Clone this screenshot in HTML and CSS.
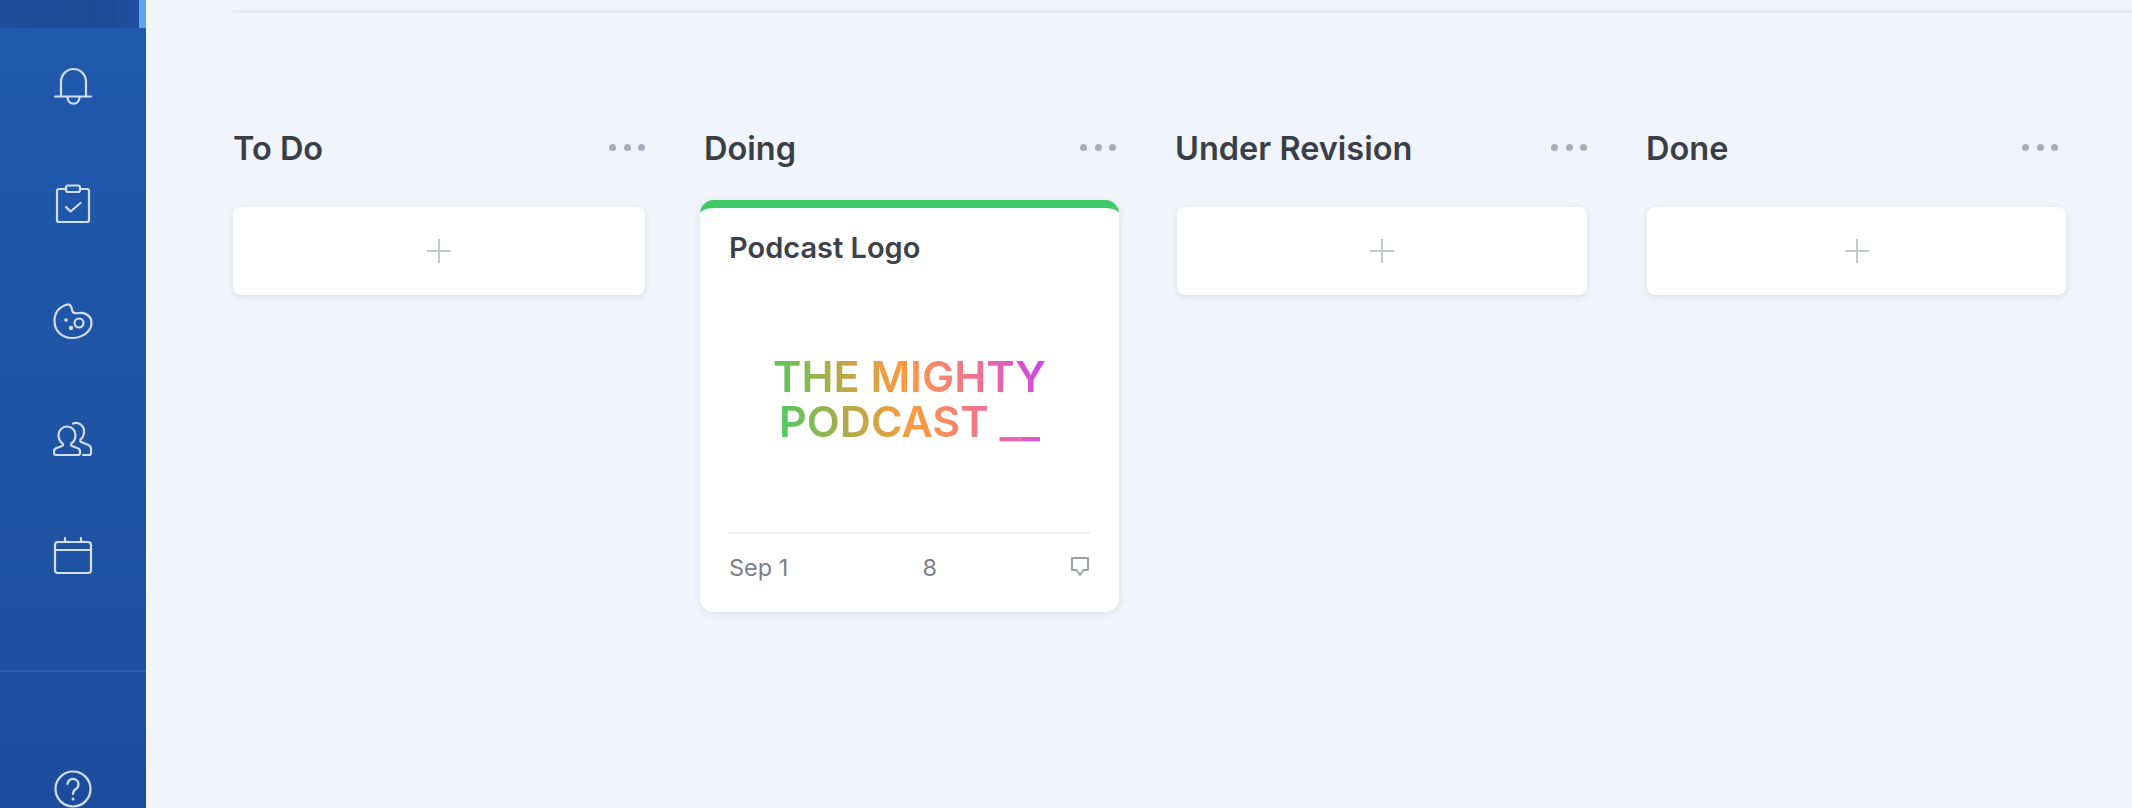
FILE: index.html
```html
<!DOCTYPE html>
<html>
<head>
<meta charset="utf-8">
<title>Board</title>
<link rel="stylesheet" href="styles.css">
</head>
<body>
<div class="app">
	<aside class="sidebar">
		<div class="activeitem"></div>
		<nav class="sidenav">
			<svg class="navicon" viewBox="0 0 40 40"><path d="M8 29.5V14.5a12.5 12.5 0 0 1 25 0V29.5"/><path d="M2 29.5H38"/><path d="M14.5 30c0 9 12 9 12 0"/></svg>
			<svg class="navicon" viewBox="0 0 40 40"><path d="M13 5H6a2 2 0 0 0-2 2V36a2 2 0 0 0 2 2H34a2 2 0 0 0 2-2V7a2 2 0 0 0-2-2H27"/><rect x="13" y="1.500" width="14" height="6.500" rx="2"/><path d="M13 23l4.500 4.500L27.500 19"/></svg>
			<svg class="navicon" viewBox="0 0 40 40"><path d="M14 3.500C6 6 1.500 12 1.500 20C1.500 30 9 37 19 37C30 37 38.500 30 38.500 22C38.500 15 32 11 26 12C22 12.700 19.500 12 19 9C18.700 6 17 2.500 14 3.500Z"/><circle cx="26" cy="22" r="4.500"/><circle class="solid" cx="13" cy="19" r="1.800"/><circle class="solid" cx="18" cy="27" r="2.200"/></svg>
			<svg class="navicon" viewBox="0 0 40 40"><path d="M3 37a2 2 0 0 1-2-2v-2c0-2 2-3 4-3.500l4-1.500c1.500-.5 1-2.500 0-3c-2-1.500-3.500-4-3.500-8a8.500 8.500 0 0 1 17 0c0 4-1.500 6.500-3.500 8c-1 .5-1.500 2.500 0 3l4 1.500c2 .5 4 1.500 4 3.500v2a2 2 0 0 1-2 2z"/><path d="M20 5.500a8 8 0 0 1 11 7.500c0 4-1 6.500-3 8c-1 .7-1 2.300 0 3l5 2c3 1 5 2 5 4.500v4.500c0 1.500-.5 2-2 2h-6"/></svg>
			<svg class="navicon" viewBox="0 0 40 40"><rect x="2" y="7" width="36" height="31" rx="3"/><path d="M2 15H38"/><path d="M12 3V7M28 3V7"/></svg>
		</nav>
		<div class="sidefoot">
			<svg class="navicon" viewBox="0 0 40 40"><circle cx="20" cy="19" r="17.500"/><path d="M14.500 14a5.500 5.500 0 1 1 8.500 5c-2 1.300-3 2.500-3 5"/><circle class="solid" cx="20" cy="29" r="1.500"/></svg>
		</div>
	</aside>
	<main class="main">
		<div class="topline"></div>
		<div class="board">
			<section class="column">
				<header class="colhead"><h2>To Do</h2><div class="dots"><i></i><i></i><i></i></div></header>
				<div class="addcard"><svg class="plus" viewBox="0 0 26 26"><path d="M13 1V25M1 13H25"/></svg></div>
			</section>
			<section class="column">
				<header class="colhead"><h2>Doing</h2><div class="dots"><i></i><i></i><i></i></div></header>
				<article class="card">
					<h3>Podcast Logo</h3>
					<div class="logo"><span class="logotext">THE MIGHTY<br>PODCAST __</span></div>
					<footer class="cardfoot">
						<span>Sep 1</span>
						<span>8</span>
						<svg class="comment" viewBox="0 0 18 20"><path d="M1 1H17V13H12.500L9 18L5.500 13H1Z"/></svg>
					</footer>
				</article>
			</section>
			<section class="column thirdcol">
				<header class="colhead"><h2>Under Revision</h2><div class="dots"><i></i><i></i><i></i></div></header>
				<div class="addcard"><svg class="plus" viewBox="0 0 26 26"><path d="M13 1V25M1 13H25"/></svg></div>
			</section>
			<section class="column lastcol">
				<header class="colhead"><h2>Done</h2><div class="dots"><i></i><i></i><i></i></div></header>
				<div class="addcard"><svg class="plus" viewBox="0 0 26 26"><path d="M13 1V25M1 13H25"/></svg></div>
			</section>
		</div>
	</main>
</div>
</body>
</html>
```

FILE: styles.css
```css
html, body {
	margin: 0;
	height: 100%;
	overflow: hidden;
}
body {
	background-color: #f2f4fb;
	font-family: "Inter", "Liberation Sans", sans-serif;
	color: #3a3f47;
}
.app {
	display: flex;
	height: 808px;
	overflow: hidden;
}

/* sidebar */
.sidebar {
	flex: 0 0 146px;
	height: 808px;
	background: linear-gradient(180deg, #2159ad 0%, #1f54a6 50%, #1c4d9c 100%);
}
.activeitem {
	height: 28px;
	box-sizing: border-box;
	background: linear-gradient(90deg, #1e4e9b 0%, #1c4a94 70%, #1f4f9e 100%);
	border-right: 7px solid #5ba6ee;
}
.sidenav {
	display: flex;
	flex-direction: column;
	align-items: center;
	gap: 77px;
	padding-top: 39px;
	height: 644px;
	box-sizing: border-box;
	border-bottom: 2px solid #2a5dac;
}
.sidefoot {
	display: flex;
	justify-content: center;
	padding-top: 98px;
}
.navicon {
	width: 40px;
	height: 40px;
	flex: none;
	fill: none;
	stroke: #d3deef;
	stroke-width: 2.200;
	stroke-linecap: round;
	stroke-linejoin: round;
}
.navicon .solid {
	fill: #d3deef;
	stroke: none;
}

/* board */
.main {
	flex: 1;
	min-width: 0;
}
.topline {
	height: 3px;
	margin: 10px 0 0 87px;
	background-color: #e9ebf2;
}
.board {
	display: grid;
	grid-template-columns: repeat(4, 412px);
	column-gap: 59px;
	margin: 115px 0 0 87px;
	align-items: start;
}
.colhead {
	display: flex;
	align-items: center;
	justify-content: space-between;
	height: 40px;
	margin-bottom: 39px;
}
.colhead h2 {
	margin: 0;
	font-size: 32.500px;
	font-weight: 600;
	color: #3a3f47;
}
.dots {
	display: flex;
	gap: 7.500px;
	margin-top: -1px;
}
.dots i {
	display: block;
	width: 7px;
	height: 7px;
	border-radius: 50%;
	background-color: #a9acb9;
}
.addcard {
	display: flex;
	align-items: center;
	justify-content: center;
	height: 88px;
	background-color: #fff;
	border-radius: 8px;
	box-shadow: 0 2px 6px rgba(40, 50, 100, 0.12);
}
.thirdcol .addcard {
	margin-left: 2px;
}
.lastcol .addcard {
	margin: 0 -8px 0 1px;
}
.plus {
	width: 26px;
	height: 26px;
	fill: none;
	stroke: #c4c8cc;
	stroke-width: 2;
}

/* card */
.card {
	margin: -7px -3px 0 -4px;
	height: 412px;
	box-sizing: border-box;
	padding: 0 29px;
	background-color: #fff;
	border-top: 8px solid #3ccb68;
	border-radius: 14px;
	box-shadow: 0 2px 8px rgba(40, 50, 100, 0.1);
	display: flex;
	flex-direction: column;
}
.card h3 {
	margin: 22px 0 0;
	font-size: 29px;
	line-height: 36px;
	font-weight: 600;
	color: #3d4249;
}
.logo {
	flex: 1;
	display: flex;
	align-items: center;
	justify-content: center;
}
.logotext {
	font-size: 43px;
	line-height: 45px;
	font-weight: 600;
	text-align: center;
	background: linear-gradient(75deg, #3ccf62 0%, #b7a94a 28%, #ff9a3e 50%, #ee6f98 76%, #c93ff0 100%);
	-webkit-background-clip: text;
	background-clip: text;
	color: transparent;
}
.cardfoot {
	display: flex;
	align-items: center;
	justify-content: space-between;
	height: 80px;
	padding: 0 1px 12px 0;
	box-sizing: border-box;
	border-top: 2px solid #eceef2;
	font-size: 23.500px;
	color: #7a7f86;
}
.comment {
	width: 18px;
	height: 20px;
	fill: none;
	stroke: #9da1a6;
	stroke-width: 2;
	stroke-linejoin: round;
}
```
